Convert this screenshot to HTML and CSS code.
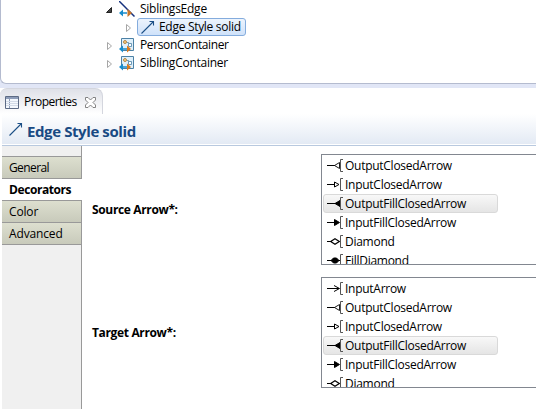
FILE: index.html
```html
<!DOCTYPE html>
<html lang="en">
<head>
<meta charset="utf-8">
<title>Properties</title>
<link rel="stylesheet" href="styles.css">
</head>
<body>
<svg class="defs" width="0" height="0">
  <defs>
    <symbol id="edge" viewBox="0 0 16 16"><path d="M1.500 14.500L13.500 2.500M9.500 2.500h4v4" fill="none" stroke="#1b4f86" stroke-width="1.100"/></symbol>
    <symbol id="container" viewBox="0 0 16 16">
      <path d="M2.500 1.500h12v12h-12z" fill="#dff0fb" stroke="#4c81a5"/>
      <circle cx="6" cy="5" r="1.500" fill="#f9cf86" stroke="#a66e25" stroke-width=".8"/>
      <path d="M8 5.500h1.500v1M9.500 6.500h3v3h-3z" fill="#fff" stroke="#4c81a5" stroke-width=".8"/>
      <path d="M0 12l4-3.500v2.700h4v1.600H4v2.700z" fill="#188ccc"/><path d="M8 8.500l4 3.500-4 3.500z" fill="#d97a20"/>
    </symbol>
    <symbol id="output" viewBox="0 0 16 16"><path d="M0 7.500h8" stroke="#000"/><path d="M12.500 4.500v6l-5-3z" fill="#fff" stroke="#000" stroke-width=".9"/><path d="M16 1.500h-2.500v12H16" fill="none" stroke="#555"/></symbol>
    <symbol id="input" viewBox="0 0 16 16"><path d="M0 7.500h7M7.500 5v5l4.500-2.500z" fill="#fff" stroke="#000"/><path d="M16 1.500h-2.500v12H16" fill="none" stroke="#555"/></symbol>
    <symbol id="outfill" viewBox="0 0 16 16"><path d="M0 7.500h9M13 4.500v6l-5-3z" fill="#000" stroke="#000"/><path d="M16 1.500h-2.500v12H16" fill="none" stroke="#555"/></symbol>
    <symbol id="infill" viewBox="0 0 16 16"><path d="M0 7.500h7M7.500 4.500v6l5-3z" fill="#000" stroke="#000"/><path d="M16 1.500h-2.500v12H16" fill="none" stroke="#555"/></symbol>
    <symbol id="arrow" viewBox="0 0 16 16"><path d="M0 7.500h12M7 4.500l5.500 3-5.500 3" fill="none" stroke="#000"/><path d="M16 1.500h-2.500v12H16" fill="none" stroke="#555"/></symbol>
    <symbol id="diamond" viewBox="0 0 16 16"><path d="M0 7.500h4" stroke="#000"/><path d="M8 4.800l4.300 2.700L8 10.200 3.700 7.500z" fill="#fff" stroke="#000" stroke-width="1.200"/><path d="M16 1.500h-2.500v12H16" fill="none" stroke="#555"/></symbol>
    <symbol id="filldiamond" viewBox="0 0 16 16"><path d="M0 7.500h13" stroke="#000"/><path d="M6.500 5h3l2.500 2.500L9.500 10h-3L4 7.500z" stroke="#000"/><path d="M16 1.500h-2.500v12H16" fill="none" stroke="#555"/></symbol>
  </defs>
</svg>
<section class="tree">
  <div class="node">
    <svg class="twist" viewBox="0 0 8 8"><path d="M6.500 1.500v5H1.500z" fill="#444" stroke="#222"/></svg>
    <svg class="icon" viewBox="0 0 16 16"><path d="M0 0L15.500 15.500" stroke="#15317e" stroke-width="1.500"/><path d="M0 12l4-3.500v2.700h4v1.600H4v2.700z" fill="#188ccc"/><path d="M8.500 8l4.500 4-4.500 4z" fill="#c87528"/></svg>
    <span class="label">SiblingsEdge</span>
  </div>
  <div class="node child">
    <svg class="twist" viewBox="0 0 8 8"><path d="M2.500 .5v7l4-3.500z" fill="#fff" stroke="#a6a6a6"/></svg>
    <div class="chosen"><svg class="icon"><use href="#edge"/></svg><span class="label">Edge Style solid</span></div>
  </div>
  <div class="node">
    <svg class="twist" viewBox="0 0 8 8"><path d="M2.500 .5v7l4-3.500z" fill="#fff" stroke="#a6a6a6"/></svg>
    <svg class="icon"><use href="#container"/></svg><span class="label">PersonContainer</span>
  </div>
  <div class="node">
    <svg class="twist" viewBox="0 0 8 8"><path d="M2.500 .5v7l4-3.500z" fill="#fff" stroke="#a6a6a6"/></svg>
    <svg class="icon"><use href="#container"/></svg><span class="label last">SiblingContainer</span>
  </div>
</section>
<section class="view">
  <div class="tab">
    <svg width="14" height="13" viewBox="0 0 14 13"><path d="M.5 .5h13v12H.5z" fill="#f4f8fd" stroke="#5d6b85"/><path d="M1 2h12" stroke="#8d9cb8" stroke-width="2"/><path d="M4.500 3v9" stroke="#8d9cb8"/><path d="M1 5.500h12M1 7.500h12M1 9.500h12" stroke="#d3dbe7"/></svg>
    <span class="label">Properties</span>
    <svg width="11" height="11" viewBox="0 0 11 11"><path d="M.5 .5h2.500l2.500 2.500L8 .5h2.500V3L8 5.500 10.500 8v2.500H8L5.500 8 3 10.500H.5V8L3 5.500.5 3z" fill="#fff" stroke="#777" stroke-width=".9"/></svg>
  </div>
  <header class="title"><svg class="icon"><use href="#edge"/></svg><h1>Edge Style solid</h1></header>
  <div class="body">
    <nav>
      <div class="side">General</div>
      <div class="side active">Decorators</div>
      <div class="side">Color</div>
      <div class="side">Advanced</div>
    </nav>
    <main>
      <div class="field">
        <label>Source Arrow*:</label>
        <ul>
          <li><svg><use href="#output"/></svg><span>OutputClosedArrow</span></li>
          <li><svg><use href="#input"/></svg><span>InputClosedArrow</span></li>
          <li class="picked"><svg><use href="#outfill"/></svg><span>OutputFillClosedArrow</span></li>
          <li><svg><use href="#infill"/></svg><span>InputFillClosedArrow</span></li>
          <li><svg><use href="#diamond"/></svg><span>Diamond</span></li>
          <li><svg><use href="#filldiamond"/></svg><span>FillDiamond</span></li>
        </ul>
      </div>
      <div class="field">
        <label>Target Arrow*:</label>
        <ul>
          <li><svg><use href="#arrow"/></svg><span>InputArrow</span></li>
          <li><svg><use href="#output"/></svg><span>OutputClosedArrow</span></li>
          <li><svg><use href="#input"/></svg><span>InputClosedArrow</span></li>
          <li class="picked"><svg><use href="#outfill"/></svg><span>OutputFillClosedArrow</span></li>
          <li><svg><use href="#infill"/></svg><span>InputFillClosedArrow</span></li>
          <li><svg><use href="#diamond"/></svg><span>Diamond</span></li>
        </ul>
      </div>
    </main>
  </div>
</section>
</body>
</html>
```

FILE: styles.css
```css
* { box-sizing: border-box; }
body { margin: 0; width: 536px; height: 409px; overflow: hidden; background: #e1e6f6; font: 12px/18px "Open Sans", "Noto Sans", sans-serif; letter-spacing: -.27px; color: #000; }
svg { display: block; flex: none; }
.defs { position: absolute; }
.tree { height: 84px; background: #fff; border: solid #b4bbcf; border-width: 0 0 1px 1px; border-bottom-left-radius: 6px; }
.node { display: flex; align-items: center; height: 18px; padding-left: 104px; }
.child { padding-left: 123px; }
.twist { width: 8px; height: 8px; margin: 2px 6px 0 0; }
.icon { width: 16px; height: 16px; }
.label { margin-left: 5px; white-space: nowrap; letter-spacing: -.4px; }
.node > .label { letter-spacing: -.38px; }
.node:first-child > .label, .node > .last { letter-spacing: -.25px; }
.chosen { display: flex; align-items: center; width: 109px; height: 18px; padding-left: 2px; margin-left: -1px; border: 1px solid #84acdd; border-radius: 3px; background: linear-gradient(#edf4fd, #cfe2fa); }
.chosen .label { margin-left: 3px; letter-spacing: -.3px; }
.view { margin-top: 4px; height: 321px; background: #fff; }
.tab { display: flex; align-items: center; width: 103px; height: 26px; padding: 1px 0 0 5px; border: solid #d4d6de; border-width: 1px 1px 0 0; border-radius: 7px 8px 0 0; background: linear-gradient(#dfe1e8, #fff); }
.tab .label { width: 53px; margin: 0 8px 0 5px; letter-spacing: -.55px; }
.title { display: flex; align-items: center; height: 32px; margin-left: 2px; padding: 4px 0 3px 6px; background: linear-gradient(#fff, #e3eaf4 30px, #fff 30px, #fff 31px, #b8c9df 31px); }
.title .icon { margin-top: -4px; }
h1 { margin: 0 0 0 3px; font-size: 15px; line-height: 20px; letter-spacing: -.4px; color: #194a83; }
.body { display: flex; height: 263px; margin-left: 2px; }
nav { width: 80px; padding-top: 10px; background: #f0f0f0; border-right: 1px solid #999; }
.side { width: 80px; height: 22px; padding-left: 7px; line-height: 21px; border: solid #999; border-width: 1px 1px 0 0; background: linear-gradient(#dddfcf, #c8cabb); letter-spacing: -.15px; }
.side:first-child { letter-spacing: -.6px; }
.side:last-child { height: 23px; border-bottom: 1px solid #999; }
.side.active { background: #fff; border-right: 0; font-weight: bold; letter-spacing: -.42px; }
main { flex: 1; padding-top: 8px; }
.field { display: flex; align-items: center; height: 111px; margin-bottom: 12px; }
label { width: 239px; padding-left: 10px; font-weight: bold; letter-spacing: -.35px; }
ul { width: 225px; flex: none; height: 111px; margin: 0; padding: 1px; overflow: hidden; list-style: none; border: 1px solid #828790; }
li { display: flex; align-items: center; width: 175px; height: 19px; padding-left: 3px; border: 1px solid transparent; border-radius: 3px; white-space: nowrap; }
li svg { width: 16px; height: 16px; }
li span { margin-left: 2px; letter-spacing: -.27px; }
.picked { border-color: #d9d9d9; background: linear-gradient(#f8f8f8, #e5e5e5); }
```
